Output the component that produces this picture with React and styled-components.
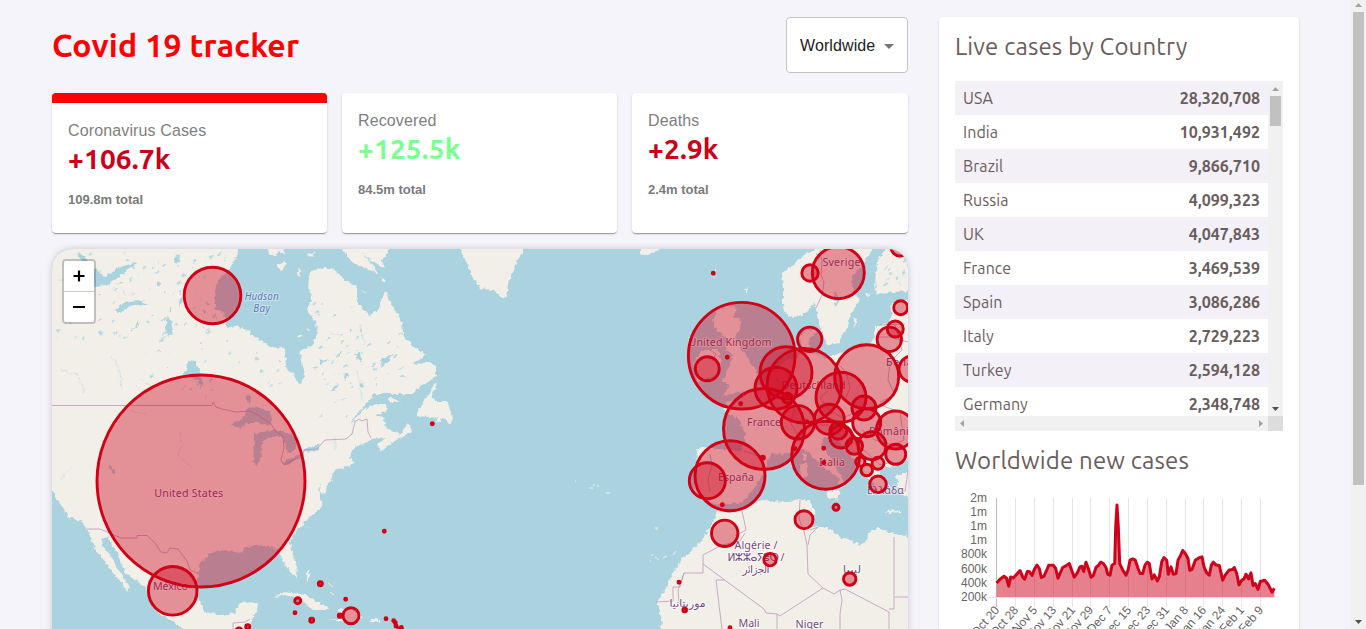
import React from "react";
import styled, { createGlobalStyle } from "styled-components";

const GlobalStyle = createGlobalStyle`
  * { box-sizing: border-box; }
  html, body { margin: 0; padding: 0; background: #f5f6fa; overflow: hidden; }
  body { font-family: "Liberation Sans", Arial, sans-serif; }
`;

const display = `"Ubuntu", "Noto Sans", sans-serif`;

const Page = styled.div`
  display: flex;
  height: 629px;
  overflow: hidden;
  background: #f5f4fa;
`;
const Content = styled.div`
  flex: 1;
  display: flex;
  align-items: flex-start;
  gap: 31px;
  padding: 17px 52px 0;
  height: 629px;
  overflow: hidden;
`;
const Left = styled.main`
  width: 856px;
  display: flex;
  flex-direction: column;
`;
const Header = styled.header`
  display: flex;
  justify-content: space-between;
  align-items: center;
  height: 56px;
  margin-bottom: 20px;
`;
const Title = styled.h1`
  margin: 0;
  font: 700 32px/38px ${display};
  letter-spacing: 0.22px;
  color: #ff0000;
  white-space: nowrap;
`;
const Select = styled.div`
  width: 122px;
  height: 56px;
  display: flex;
  align-items: center;
  padding: 2px 0 0 13px;
  gap: 9px;
  border: 1px solid #c4c4c4;
  border-radius: 4px;
  background: #fff;
  color: #212121;
  font-size: 16px;
  letter-spacing: 0.1px;
`;
const Caret = styled.span`
  border: 5px solid transparent;
  border-top-color: #757575;
  border-bottom: 0;
`;
const Stats = styled.section`
  display: grid;
  grid-template-columns: 275px 275px 276px;
  gap: 15px;
  height: 140px;
  margin-bottom: 16px;
`;
const StatCard = styled.article`
  background: #fff;
  border-radius: 4px;
  border-top: ${(p) => (p.$active ? "10px solid #ff0000" : "0")};
  padding: 16px;
  box-shadow: 0 2px 1px -1px rgba(0, 0, 0, 0.2), 0 1px 1px rgba(0, 0, 0, 0.14), 0 1px 3px rgba(0, 0, 0, 0.12);
`;
const StatLabel = styled.div`
  color: #808080;
  font-size: 16px;
  line-height: 24px;
  letter-spacing: 0.13px;
`;
const StatValue = styled.div`
  font: 700 28px/32px ${display};
  letter-spacing: 0.15px;
  color: ${(p) => p.$color};
`;
const StatTotal = styled.div`
  color: #7a7a7a;
  font-size: 13px;
  font-weight: 700;
  line-height: 19px;
  margin-top: 15px;
`;
const MapShadow = styled.div`
  border-radius: 20px;
  box-shadow: 0 0 8px -2px rgba(0, 0, 0, 0.3);
`;
const MapFrame = styled.section`
  height: 500px;
  width: 856px;
  border-radius: 20px;
  background: #aad3df;
  position: relative;
  overflow: hidden;
`;
const BlockSvg = styled.svg`
  display: block;
`;
const Zoom = styled.div`
  position: absolute;
  left: 10px;
  top: 10px;
  width: 34px;
  height: 65px;
  border: 2px solid rgba(0, 0, 0, 0.2);
  border-radius: 4px;
  background-clip: padding-box;
`;
const ZoomButton = styled.div`
  height: ${(p) => (p.$first ? 31 : 30)}px;
  background: #fff;
  border-bottom: ${(p) => (p.$first ? "1px solid #ccc" : "0")};
  border-radius: ${(p) => (p.$first ? "2px 2px 0 0" : "0 0 2px 2px")};
  display: flex;
  align-items: center;
  justify-content: center;
`;
const Side = styled.aside`
  width: 360px;
  height: 740px;
  background: #fff;
  border-radius: 4px;
  padding: 16px;
  box-shadow: 0 2px 1px -1px rgba(0, 0, 0, 0.2), 0 1px 1px rgba(0, 0, 0, 0.14), 0 1px 3px rgba(0, 0, 0, 0.12);
`;
const SideTitle = styled.h3`
  margin: 0 0 ${(p) => p.$gap || 20}px;
  font: 400 24px/28px ${display};
  letter-spacing: 0.15px;
  color: #6a5d5d;
  white-space: nowrap;
`;
const TableBox = styled.div`
  width: 328px;
  display: grid;
  grid-template-columns: 313px 15px;
  grid-template-rows: 335px 15px;
  margin-bottom: 16px;
`;
const Rows = styled.div`
  overflow: hidden;
`;
const Row = styled.div`
  height: 34px;
  display: flex;
  justify-content: space-between;
  align-items: center;
  padding: 0 8px;
  background: ${(p) => (p.$shaded ? "#f3f0f7" : "#fff")};
  font: 400 16px/34px ${display};
  letter-spacing: 0.08px;
  color: #6a5d5d;
`;
const Count = styled.strong`
  font-size: 16px;
  letter-spacing: 0.03px;
`;
const VTrack = styled.div`
  width: 15px;
  height: 100%;
  background: #f1f1f1;
  display: flex;
  flex-direction: column;
  align-items: center;
  justify-content: space-between;
  padding: ${(p) => p.$pad};
`;
const HTrack = styled.div`
  height: 15px;
  background: #f1f1f1;
  display: flex;
  align-items: center;
  justify-content: space-between;
  padding: 0 5px;
`;
const Corner = styled.div`
  background: #dcdcdc;
`;
const Group = styled.div`
  display: flex;
  flex-direction: column;
  align-items: center;
  gap: ${(p) => p.$gap}px;
`;
const Thumb = styled.div`
  width: 11px;
  height: ${(p) => p.$h}px;
  background: #c1c1c1;
`;

const Arrow = ({ dir, color = "#a3a3a3" }) => {
  const d = {
    up: "M0 4L3.5 0L7 4Z",
    down: "M0 0L7 0L3.5 4Z",
    left: "M4 0L4 7L0 3.5Z",
    right: "M0 0L4 3.5L0 7Z",
  }[dir];
  const vertical = dir === "up" || dir === "down";
  return (
    <BlockSvg width={vertical ? 7 : 4} height={vertical ? 4 : 7}>
      <path d={d} fill={color} />
    </BlockSvg>
  );
};

const countries = [
  ["USA", "28,320,708"],
  ["India", "10,931,492"],
  ["Brazil", "9,866,710"],
  ["Russia", "4,099,323"],
  ["UK", "4,047,843"],
  ["France", "3,469,539"],
  ["Spain", "3,086,286"],
  ["Italy", "2,729,223"],
  ["Turkey", "2,594,128"],
  ["Germany", "2,348,748"],
];

const land = [
  // North America
  "M40 240L238 240L238 252L235 260L232 265L227 272L218 280L215 290L215 308L223 312L227 328L235 326L245 329L255 337L270 347L285 348L286 367L292 373L300 385L305 375L300 352L312 345L318 333L315 320L307 310L312 297L308 287L310 270L322 268L333 268L345 280L357 287L357 303L363 309L370 316L379 308L385 291L392 305L401 320L404 337L415 348L427 354L412 365L428 361L436 366L436 377L420 387L411 394L375 394L368 402L360 410L350 423L340 430L353 421L363 410L373 405L386 404L387 410L376 415L383 418L387 429L400 434L408 423L412 432L398 439L380 451L377 444L387 437L372 439L363 444L353 448L350 457L355 463L343 468L333 472L332 478L327 485L326 492L322 495L319 482L320 497L322 508L312 515L297 530L290 542L293 555L297 567L296 577L290 572L282 560L278 549L265 545L245 547L242 553L225 550L212 552L200 563L198 577L197 597L205 612L222 615L235 613L240 603L258 602L257 612L252 618L248 640L192 640L178 625L158 613L152 603L145 587L125 572L117 553L108 538L100 537L102 545L110 555L120 572L130 587L128 592L117 577L105 562L95 548L87 529L82 522L68 517L65 510L57 500L52 490L40 480Z",
  "M435 383L426 398L416 416L430 417L438 418L436 423L445 417L450 425L453 418L450 410L448 402L437 402L432 397L437 384Z",
  "M387 397L395 399L401 403L392 403Z",
  "M338 245L353 263L378 274L375 268L362 252L370 260L385 268L382 260L388 253L387 245Z",
  "M381 277L385 280L384 282Z",
  "M266 240L269 254L276 257L278 250L284 255L286 240Z",
  "M277 266L284 261L287 264L281 271Z M298 269L301 269L300 277L297 275Z M306 255L316 252L313 257Z",
  "M459 240L462 253L467 263L472 276L480 288L493 290L503 299L507 295L508 284L512 273L517 261L523 252L524 240Z",
  // Caribbean
  "M273 597L285 592L305 595L318 602L330 608L328 610L312 610L302 600L285 595Z",
  "M330 619L341 619L338 610L350 608L363 618L350 623Z",
  "M371 619L379 619L379 622L371 622Z M307 619L315 621L311 623Z M307 567L310 576L307 584Z",
  // Scandinavia and Finland
  "M817 240L813 251L805 254L793 265L782 273L783 290L783 307L788 316L795 318L807 312L815 303L818 320L822 333L827 345L840 343L842 335L848 328L850 315L860 300L853 293L852 277L862 265L870 253L875 240Z",
  "M886 240L885 251L877 260L875 283L877 295L893 292L915 290L915 240Z",
  // Continental Europe
  "M915 300L900 300L890 305L892 315L888 324L875 327L873 340L867 347L857 348L840 353L827 358L812 352L808 340L817 332L807 328L800 337L802 350L797 358L787 360L773 372L767 383L753 388L744 398L727 402L723 410L737 418L745 433L745 443L740 451L718 449L703 447L697 450L698 465L695 480L693 493L703 496L710 501L715 505L723 505L743 502L755 487L765 473L764 467L772 453L783 455L793 452L803 448L813 457L827 470L840 478L837 490L845 485L840 474L832 460L822 447L823 437L837 440L853 457L860 465L867 477L872 482L878 492L887 485L880 474L882 468L893 466L908 459L915 459Z",
  "M908 472L896 476L898 487L904 496L915 500L915 472Z",
  "M825 492L840 490L837 500L828 497Z M800 465L807 463L807 477L801 479Z M803 453L806 452L806 460L803 460Z M886 511L898 510L902 512L889 513Z M854 318L858 321L854 328Z M865 293L872 294L867 296Z",
  "M717 310L728 306L737 308L733 318L742 320L739 330L735 337L740 347L746 355L750 363L758 373L755 387L745 391L733 393L722 397L730 385L722 382L728 368L733 357L727 350L725 337L716 330L713 320Z",
  "M703 350L718 350L722 363L717 377L697 382L693 363Z",
  "M640 240L640 254L647 255L658 250L662 240Z M745 289L748 287L746 296Z M713 270L716 270L714 279Z",
  // Africa
  "M728 513L717 511L713 522L710 527L700 543L683 558L673 573L666 588L657 602L660 612L662 622L660 640L915 640L915 538L890 533L878 528L868 533L867 541L860 545L848 539L840 537L828 527L810 527L815 510L810 502L800 499L783 502L763 500L747 507Z",
].join(" ");

const water = [
  "M77 253L84 256L90 263L104 277L120 267L138 262L119 277L106 286L94 287L91 276Z",
  "M123 303L138 301L148 305L132 305L119 313L115 310Z",
  "M188 360L196 362L200 373L203 382L201 390L198 381L192 378L182 374L186 370Z",
  "M230 425L242 419L248 408L254 407L268 410L273 420L270 426L258 423L248 423L241 428Z",
  "M254 434L263 432L274 429L290 433L277 437L267 438L261 445L262 455L257 465L253 462L254 447Z",
  "M276 430L291 433L298 445L290 454L285 449L284 440Z",
  "M280 463L295 456L304 452L300 457L288 465Z",
  "M303 450L312 447L319 444L318 450L306 452Z",
  "M167 317L172 323L174 331L168 337L166 328Z",
  "M180 297L183 301L179 308Z M247 394L251 398L249 403L246 399Z M109 464L115 471L114 474L109 468Z",
  "M175 256L180 254L179 262L173 263Z M158 281L162 283L158 287Z M183 273L187 276L181 277Z M138 320L140 325L136 325Z",
  "M380 360L392 354L390 361L381 367Z M355 353L360 352L361 361L357 359Z M332 390L338 383L335 391Z M361 382L364 384L363 388L360 385Z",
  "M320 361L329 359L320 364Z M336 356L342 350L339 357Z M345 372L349 375L344 380Z",
  "M833 294L837 292L839 302L836 308Z M817 253L820 255L818 262Z M899 333L903 335L900 339Z",
].join(" ");

// Deterministic scatter of small lakes across the Canadian shield.
const scatter = (() => {
  let seed = 7;
  const rnd = () => {
    seed = (seed * 16807) % 2147483647;
    return seed / 2147483647;
  };
  const zones = [
    [56, 252, 225, 345, 95],
    [140, 335, 230, 400, 20],
    [232, 352, 284, 400, 10],
    [312, 300, 352, 420, 34],
    [355, 325, 405, 385, 20],
    [882, 255, 907, 288, 14],
  ];
  return zones.flatMap(([x1, y1, x2, y2, n]) =>
    Array.from({ length: n }, () => {
      const x = x1 + rnd() * (x2 - x1);
      const y = y1 + rnd() * (y2 - y1);
      const l = 0.8 + rnd() * 2.8;
      return `M${x.toFixed(1)} ${y.toFixed(1)}l${l.toFixed(1)} ${(-l * (0.2 + rnd() * 1.2)).toFixed(1)}l${(rnd() * 1.6).toFixed(1)} ${(0.8 + rnd() * 1.2).toFixed(1)}l${(-l).toFixed(1)} ${(l * 0.8).toFixed(1)}Z`;
    })
  ).join("");
})();

const borders = [
  "M52 405.5L212 405.5L213 402L216 407L222 409L236 412L250 411L258 415L271 424L274 429L283 437L284 448L281 460L284 465L294 460L303 456L304 450L317 449L325 440L346 439L352 434L355 422L359 419L362 421L367 419L368 432L371 438",
  "M87 529L100 529L121 538L137 538L137 535.5L147 535.5L155 543L161 552L167 553L170 548L178 549L187 561L190 570L200 574",
  "M233 629L233 623L245 622L250 619",
  "M820 250L822 262L821 275L824 282L822 295L816 308",
  "M656 602L673 601L673 587L680 587L684 573L703 573L703 555L722 545L740 541L745 533",
  "M703 564L764 609L766 613L777 614L780 616L823 588L808 574L807 545L804 531L799 519L800 500",
  "M741 507L744 520L746 530L735 536",
  "M777 629L777 614M684 573L678 590L679 602M716 580L724 580M716 580L722 629M823 588L834 594L840 590L845 589L889 612L889 629M840 590L842 600L840 614L840 629M894 537L894 609L889 609M895 597L908 597",
  "M810 530L818 527L810 535L808 545",
  "M880 325L905 324M878 337L890 337L908 342M895 325L902 350L890 362L888 380L895 395L880 402",
  "M828 391L820 398L828 408L842 418L862 410L880 405L900 412L904 440M845 400L850 388L846 372L836 362M788 400L795 410L790 422L800 438L810 425L828 425M744 451L764 458M710 454L712 465L708 480L710 492M710 350L716 354L712 361M862 430L875 440L893 445L904 440M850 440L866 452L880 465L893 462",
  "M905 492L908 470",
].join("");

const rivers =
  "M58 280L85 281M60 370L78 375L84 392M112 355L120 372L122 390M60 480L72 465M180 432L182 445L178 455L192 468M130 410L145 415M140 380L150 385M328 332L340 335M360 325L365 345M357 370L362 400M335 438L335 450";

const circles = [
  [212.5, 295.5, 28.3], [172.7, 590.8, 24.3],
  [320.3, 583.7, 2], [297.7, 600.7, 3], [295, 612.7, 1], [311.7, 620.3, 2], [247.7, 626.7, 2], [239, 631, 3],
  [384.3, 531.3, 1], [345.7, 599.3, 1], [340, 615.7, 1.7], [351, 615.7, 8], [386, 618.7, 1], [393.7, 620.7, 1],
  [395.3, 622.7, 1], [396, 626, 1], [401.3, 627.5, 1], [398.7, 629, 1], [432.3, 423.7, 1],
  [713.3, 273.3, 1], [741.7, 355.7, 53.3], [707.3, 368.7, 12], [727.3, 357.3, 1], [740.7, 403.7, 1],
  [838.3, 272.7, 26], [810, 273, 8.2], [809.7, 339.3, 12.2], [900, 247, 9], [900.7, 307.7, 7], [895.3, 329, 8],
  [889.3, 339.3, 12.2], [912, 369, 13], [786, 372.7, 26], [776, 388.3, 21], [804.3, 385.7, 37.3], [866.7, 376.7, 32],
  [841, 397.3, 25], [764, 429, 40.5], [787.7, 398.3, 5], [798, 422.3, 16.7], [829.3, 419.3, 15], [864, 408, 12],
  [866.7, 422.7, 14], [895.5, 430, 19], [806.7, 421.7, 1], [838.3, 430.7, 8.5], [841, 436.7, 11.3], [854.3, 446, 8.3],
  [872, 445.7, 14], [895.7, 454.3, 10], [860.3, 461.7, 4.6], [878, 463.3, 6], [866.7, 470, 5.8], [878, 484.3, 8.3],
  [825.7, 455.3, 34], [823.7, 448.3, 1], [823.7, 462.7, 1], [795, 448.7, 1], [762.7, 457.7, 1.6],
  [730, 475.7, 35], [707.3, 480.7, 18], [722.3, 504.7, 1], [724.7, 533.3, 13.2], [804, 519.7, 9], [836, 507.3, 3],
  [770, 559.7, 6.2], [849.7, 579, 6.2], [679, 582.3, 1], [684.7, 610, 1.8], [730, 627.7, 1],
];

const labels = [
  ["United States", 188.7, 496.7, 69],
  ["México", 170.5, 590, 35],
  ["United Kingdom", 730, 346, 83],
  ["Sverige", 841.5, 266, 38],
  ["Deutschland", 813.5, 388.5, 64],
  ["France", 764, 426, 34],
  ["España", 736, 481, 36],
  ["Italia", 832, 466, 26],
  ["România", 892, 435, 46],
  ["Беларусь", 912, 366, 52],
  ["Ελλάδα", 885.5, 494, 37],
  ["Algérie /", 756, 548.5, 43],
  ["ⵍⵣⵣⴰⵢⴻⵔ /", 756, 560.5, 57],
  ["الجزائر", 756, 572.5, 27],
  ["ليبيا", 852, 572.5, 18],
  ["موريتانيا", 687.5, 607, 36],
  ["Mali", 749, 627, 21],
  ["Niger", 809.5, 627.5, 28],
];

const WorldMap = () => (
  <BlockSvg width="856" height="380" viewBox="52 249 856 380">
    <defs>
      <filter id="coast" x="0" y="0" width="100%" height="100%" colorInterpolationFilters="sRGB">
        <feTurbulence type="fractalNoise" baseFrequency="0.25" numOctaves="2" seed="4" result="n" />
        <feDisplacementMap in="SourceGraphic" in2="n" scale="5" xChannelSelector="R" yChannelSelector="G" />
      </filter>
    </defs>
    <rect x="52" y="249" width="856" height="380" fill="#aad3df" />
    <g filter="url(#coast)">
      <path d={land} fill="#f2efe9" />
      <path d={water} fill="#aad3df" />
      <path d={scatter} fill="#aad3df" opacity="0.8" />
      <path d={rivers} fill="none" stroke="#c4dbe0" strokeWidth="0.7" />
      <path d="M298 334l4 2l-2 3zM287 370l4 2l-3 2zM363 291l3 0l-1 3zM308 328l2 3l-3 0z" fill="#f2efe9" />
    </g>
    <path
      d="M575 481h1M589 488h4M593 485h2M597 486h2M606 493h4M655 528h3M651 555h2M650 561h1M656 529h2M655 557l4 3M663 558l4-2M673 555l3-4M328 583l5 4M330 592l4 3"
      stroke="#f2efe9"
      fill="none"
    />
    <path d={borders} fill="none" stroke="#b58fb5" strokeWidth="0.9" opacity="0.8" />
    <g
      fontFamily='"Noto Sans", "DejaVu Sans", sans-serif'
      fontSize="10.7"
      textAnchor="middle"
      paintOrder="stroke"
      stroke="#ffffff"
      strokeOpacity="0.6"
      strokeWidth="2"
      strokeLinejoin="round"
      fill="#734a7c"
    >
      {labels.map(([t, x, y, w]) => (
        <text key={t} x={x} y={y} textLength={w}>{t}</text>
      ))}
      <g fill="#5a78b8" fontStyle="italic" fontSize="9.9" strokeOpacity="0.4">
        <text x="261.7" y="300" textLength="34">Hudson</text>
        <text x="261.7" y="312" textLength="17">Bay</text>
      </g>
    </g>
    <g fill="#d0021b" fillOpacity="0.4" stroke="#d00016" strokeWidth="2.9">
      <ellipse cx="201" cy="481" rx="104" ry="106" />
      {circles.map(([x, y, r], i) => (
        <circle key={i} cx={x} cy={y} r={r} fillOpacity={r <= 1 ? 1 : 0.4} />
      ))}
    </g>
  </BlockSvg>
);

const series = [
  200,458,210,447,222,438,230,445,236,468,242,440,250,443,258,434,270,421,278,440,284,447,292,424,298,424,306,436,314,415,
  321,405,328,415,334,442,342,438,350,420,356,405,370,405,377,415,384,444,392,425,398,412,406,408,418,400,425,420,433,441,
  442,428,450,410,456,408,461,424,468,396,475,415,483,441,490,436,498,412,506,405,512,396,520,400,528,412,533,432,540,435,
  546,405,554,400,557,290,561,224,565,290,569,400,578,420,588,435,594,420,600,390,608,386,616,390,623,412,630,430,638,430,
  645,405,652,396,658,400,662,425,666,446,673,434,682,452,688,440,695,395,702,382,710,390,715,432,723,410,730,432,738,430,
  744,390,752,375,758,361,766,370,774,385,779,420,786,418,796,390,806,383,816,380,822,410,830,428,838,435,844,405,850,396,
  858,404,868,406,878,450,886,434,898,419,908,418,913,412,920,430,927,464,935,450,942,446,948,432,956,446,963,428,969,466,
  976,460,984,478,991,454,1004,450,1014,462,1026,486,1033,474,
];
const points = [];
for (let i = 0; i < series.length; i += 2) {
  points.push(`${(series[i] / 3 - 25).toFixed(1)} ${(series[i + 1] / 3 - 59.8).toFixed(1)}`);
}
const line = "M" + points.join("L");

const ticks = [
  ["Oct 20", 41.5], ["Oct 28", 60.5], ["Nov 5", 79.5], ["Nov 13", 98.5], ["Nov 21", 117.5], ["Nov 29", 135.5],
  ["Dec 7", 154.5], ["Dec 15", 173.5], ["Dec 23", 192.5], ["Dec 31", 211.5], ["Jan 8", 230.5], ["Jan 16", 248.5],
  ["Jan 24", 267.5], ["Feb 1", 286.5], ["Feb 9", 305.5],
];
const levels = ["2m", "1m", "1m", "1m", "800k", "600k", "400k", "200k"];

const CasesChart = () => (
  <BlockSvg width="328" height="164" viewBox="0 0 328 164">
    {ticks.map(([t, x], i) => (
      <g key={t}>
        <path d={`M${x} 8V117`} stroke={i ? "#e5e5e5" : "#bfbfbf"} />
        <text
          transform={`translate(${x} 117.5) rotate(-49)`}
          textAnchor="end"
          dy="4.5"
          fontSize="12"
          fill="#666"
          fontFamily='"Liberation Sans", Arial, sans-serif'
        >
          {t}
        </text>
      </g>
    ))}
    <path d="M32 107.5H319.5" stroke="#e5e5e5" />
    <path d={`${line}L319.3 107L41.7 107Z`} fill="#d0021b" fillOpacity="0.5" />
    <path d={line} fill="none" stroke="#d0021b" strokeWidth="3" strokeLinejoin="round" />
    {levels.map((t, i) => (
      <text
        key={i}
        x="32"
        y={12 + i * 14.1}
        textAnchor="end"
        fontSize="12"
        fill="#666"
        fontFamily='"Liberation Sans", Arial, sans-serif'
      >
        {t}
      </text>
    ))}
  </BlockSvg>
);

export default function App() {
  return (
    <Page>
      <GlobalStyle />
      <Content>
        <Left>
          <Header>
            <Title>Covid 19 tracker</Title>
            <Select>
              Worldwide
              <Caret />
            </Select>
          </Header>
          <Stats>
            <StatCard $active>
              <StatLabel>Coronavirus Cases</StatLabel>
              <StatValue $color="#cc0018">+106.7k</StatValue>
              <StatTotal>109.8m total</StatTotal>
            </StatCard>
            <StatCard>
              <StatLabel>Recovered</StatLabel>
              <StatValue $color="#7dff90">+125.5k</StatValue>
              <StatTotal>84.5m total</StatTotal>
            </StatCard>
            <StatCard>
              <StatLabel>Deaths</StatLabel>
              <StatValue $color="#cc0018">+2.9k</StatValue>
              <StatTotal>2.4m total</StatTotal>
            </StatCard>
          </Stats>
          <MapShadow>
            <MapFrame>
              <WorldMap />
              <Zoom>
                <ZoomButton $first>
                  <svg width="12" height="12"><path d="M6 0.5V11.5M0.5 6H11.5" stroke="#000" strokeWidth="2.2" /></svg>
                </ZoomButton>
                <ZoomButton>
                  <svg width="12" height="12"><path d="M0 6H12" stroke="#000" strokeWidth="2.2" /></svg>
                </ZoomButton>
              </Zoom>
            </MapFrame>
          </MapShadow>
        </Left>
        <Side>
          <SideTitle>Live cases by Country</SideTitle>
          <TableBox>
            <Rows>
              {countries.map(([name, n], i) => (
                <Row key={name} $shaded={i % 2 === 0}>
                  <span>{name}</span>
                  <Count>{n}</Count>
                </Row>
              ))}
            </Rows>
            <VTrack $pad="6px 0 5px">
              <Group $gap={5}>
                <Arrow dir="up" />
                <Thumb $h={30} />
              </Group>
              <Arrow dir="down" color="#505050" />
            </VTrack>
            <HTrack>
              <Arrow dir="left" />
              <Arrow dir="right" />
            </HTrack>
            <Corner />
          </TableBox>
          <SideTitle $gap={15}>Worldwide new cases</SideTitle>
          <CasesChart />
        </Side>
      </Content>
      <VTrack $pad="3px 0 5px">
        <Group $gap={5}>
          <Arrow dir="up" />
          <Thumb $h={473} />
        </Group>
        <Arrow dir="down" color="#505050" />
      </VTrack>
    </Page>
  );
}
